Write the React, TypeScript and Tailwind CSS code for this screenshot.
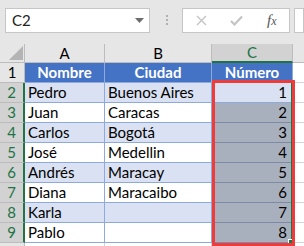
import React from "react";

const rows: [string, string, string][] = [
  ["Pedro", "Buenos Aires", "1"],
  ["Juan", "Caracas", "2"],
  ["Carlos", "Bogotá", "3"],
  ["José", "Medellin", "4"],
  ["Andrés", "Maracay", "5"],
  ["Diana", "Maracaibo", "6"],
  ["Karla", "", "7"],
  ["Pablo", "", "8"],
];

export default function App() {
  return (
    <div className="relative w-[304px] h-[246px] overflow-hidden bg-[#e6e6e6] font-['Lato',sans-serif] text-[15px] text-black">
      {/* Formula bar */}
      <div className="h-[44px] flex items-start pt-[8px]">
        <div className="ml-[5px] w-[145px] h-[25px] bg-white border border-[#c6c6c6] flex items-center pl-[6px] pr-[5px]">
          <span className="text-[15px] leading-none text-[#222]">C2</span>
          <svg className="ml-auto" width="9" height="5" viewBox="0 0 9 5">
            <path d="M0 0 L9 0 L4.5 5 Z" fill="#6d6d6d" />
          </svg>
        </div>
        <div className="ml-[16px] mt-[7px] flex flex-col gap-[2px]">
          <div className="w-[2px] h-[2px] bg-[#b0b0b0]" />
          <div className="w-[2px] h-[2px] bg-[#b0b0b0]" />
          <div className="w-[2px] h-[2px] bg-[#b0b0b0]" />
        </div>
        <div className="ml-[14px] w-[108px] h-[25px] bg-white border border-[#c6c6c6] flex items-center">
          <svg className="ml-[13px]" width="11" height="11" viewBox="0 0 11 11">
            <path d="M1 1 L10 10 M10 1 L1 10" stroke="#c4c4c4" strokeWidth="1.4" />
          </svg>
          <svg className="ml-[23px]" width="13" height="11" viewBox="0 0 13 11">
            <path d="M1 6 L4.5 9.5 L12 1.5" stroke="#c4c4c4" strokeWidth="2.2" fill="none" />
          </svg>
          <span className="ml-[24px] font-['Liberation_Serif',serif] italic text-[15px] leading-none text-[#555]">
            f<span className="text-[12px]">x</span>
          </span>
        </div>
        <div className="ml-[4px] flex-1 h-[25px] bg-white border border-[#c6c6c6]" />
      </div>

      {/* Sheet */}
      <div className="grid grid-cols-[25px_80px_107px_81px_11px] grid-rows-[19px_repeat(10,20px)]">
        {/* column headers */}
        <div className="relative border-r border-b border-[#bcbcbc] bg-[#e6e6e6]">
          <svg className="absolute right-[1px] bottom-[2px]" width="14" height="14" viewBox="0 0 14 14">
            <path d="M14 0 L14 14 L0 14 Z" fill="#b4b4b4" />
          </svg>
        </div>
        <div className="flex items-center justify-center border-r border-b border-[#bcbcbc] bg-[#e6e6e6] leading-none">A</div>
        <div className="flex items-center justify-center border-r border-b border-[#bcbcbc] bg-[#e6e6e6] leading-none">B</div>
        <div className="flex items-center justify-center border-r border-[#bcbcbc] border-b-2 border-b-[#217346] bg-[#d2d2d2] text-[#217346] leading-none">C</div>
        <div className="border-b border-[#bcbcbc] bg-[#e6e6e6]" />

        {/* header row 1 */}
        <div className="flex items-center justify-center border-r border-b border-[#bcbcbc] bg-[#e6e6e6] leading-none">1</div>
        <div className="flex items-center justify-center border-r border-b border-[#8ea9db] bg-[#4472c4] text-white font-bold leading-none">Nombre</div>
        <div className="flex items-center justify-center border-r border-b border-[#8ea9db] bg-[#4472c4] text-white font-bold leading-none">Ciudad</div>
        <div className="flex items-center justify-center border-r border-b border-[#8ea9db] bg-[#4472c4] text-white font-bold leading-none">Número</div>
        <div className="border-b border-[#d4d4d4] bg-white" />

        {rows.map(([a, b, c], i) => {
          const band = i % 2 === 0 ? "bg-[#d9e1f2]" : "bg-white";
          const sel = i === 0 ? "bg-[#d9e1f2] border-b-[#8ea9db]" : "bg-[#a9b0bd] border-b-[#7d8aa5]";
          return (
            <React.Fragment key={i}>
              <div className="flex items-center justify-center border-r-2 border-r-[#217346] border-b border-b-[#bcbcbc] bg-[#d2d2d2] text-[#217346] leading-none">
                {i + 2}
              </div>
              <div className={`flex items-center pl-[3px] border-r border-b border-[#8ea9db] leading-none ${band}`}>{a}</div>
              <div className={`flex items-center pl-[3px] border-r border-b border-[#8ea9db] leading-none ${band}`}>{b}</div>
              <div className={`flex items-center justify-end pr-[5px] border-r border-r-[#8ea9db] border-b leading-none ${sel}`}>{c}</div>
              <div className="border-b border-[#d4d4d4] bg-white" />
            </React.Fragment>
          );
        })}
        <div className="border-r border-[#bcbcbc] bg-[#e6e6e6]" />
        <div className="border-r border-[#d4d4d4] bg-white" />
        <div className="border-r border-[#d4d4d4] bg-white" />
        <div className="border-r border-[#d4d4d4] bg-white" />
        <div className="bg-white" />
      </div>

      {/* selection green edge + fill handle */}
      <div className="absolute left-[291px] top-[83px] w-[1px] h-[160px] bg-[#217346]" />
      <div className="absolute left-[288px] top-[239px] w-[6px] h-[6px] bg-[#217346] border border-white" />
      {/* red highlight box */}
      <div className="absolute left-[212px] top-[80px] w-[83px] h-[166px] border-[3px] border-[#ee3b3b]" />
    </div>
  );
}
